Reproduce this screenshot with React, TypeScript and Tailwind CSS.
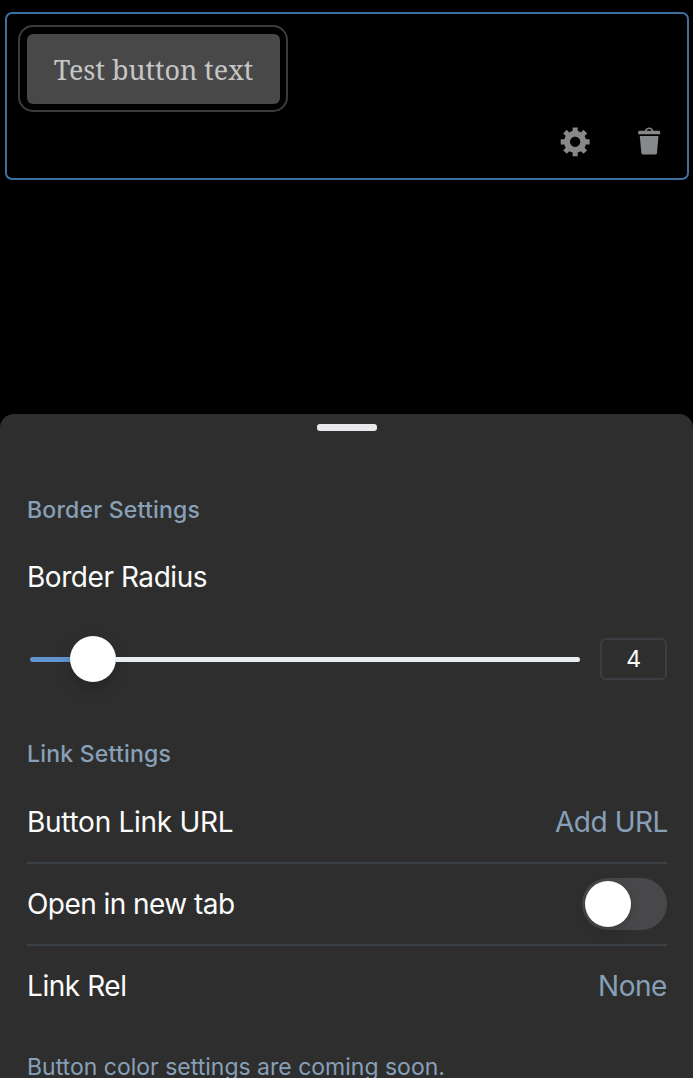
import type { ReactNode } from "react";

function GearIcon() {
  return (
    <svg viewBox="0 0 20 20" className="size-[34px] fill-[#87888a]" aria-hidden="true">
      <path d="M18 12h-2.18c-.17.7-.44 1.35-.81 1.93l1.54 1.54-2.1 2.1-1.54-1.54c-.58.36-1.23.63-1.91.79V19H8v-2.18c-.68-.16-1.33-.43-1.91-.79l-1.54 1.54-2.12-2.12 1.54-1.54c-.36-.58-.63-1.23-.79-1.91H1V9.03h2.17c.16-.7.44-1.35.8-1.94L2.43 5.55l2.1-2.1 1.54 1.54c.58-.37 1.24-.64 1.93-.81V2h3v2.18c.68.16 1.33.43 1.91.79l1.54-1.54 2.12 2.12-1.54 1.54c.36.59.64 1.24.8 1.94H18V12zm-8.5 1.5c1.66 0 3-1.34 3-3s-1.34-3-3-3-3 1.34-3 3 1.34 3 3 3z" />
    </svg>
  );
}

function TrashIcon() {
  return (
    <svg viewBox="0 0 20 20" className="size-[34px] fill-[#87888a]" aria-hidden="true">
      <path d="M12 4h3c.6 0 1 .4 1 1v1H3V5c0-.6.5-1 1-1h3c.2-1.1 1.3-2 2.5-2s2.3.9 2.5 2zM8 4h3c-.2-.6-.9-1-1.5-1S8.2 3.4 8 4zM4 7h11l-.9 10.1c0 .5-.5.9-1 .9H5.9c-.5 0-.9-.4-1-.9L4 7z" />
    </svg>
  );
}

function ButtonBlock() {
  return (
    <section className="mt-3 mr-1 ml-[5px] h-[168px] rounded-[7px] border-2 border-[#3f6f9f] pt-[11px] pl-[11px]">
      <div className="h-[87px] w-[270px] rounded-[15px] border-2 border-[#3c3c3c] p-[7px]">
        <div className="flex h-[70px] w-[253px] items-center justify-center rounded-md bg-[#484848] pt-0.5 font-['Noto_Serif','DejaVu_Serif',serif] text-[26.9px] whitespace-nowrap text-[#c6c6c6]">
          Test button text
        </div>
      </div>
      <div className="mt-3 flex justify-end gap-10 pr-5">
        <GearIcon />
        <TrashIcon />
      </div>
    </section>
  );
}

function Heading({ children }: { children: ReactNode }) {
  return (
    <h2 className="h-8 text-[23px] leading-8 font-medium tracking-[0.22px] text-[#87a0b8]">{children}</h2>
  );
}

function Row({ children }: { children: ReactNode }) {
  return <div className="flex h-20 items-center justify-between">{children}</div>;
}

function SettingsSheet() {
  return (
    <section className="mt-[234px] flex h-[664px] flex-col overflow-hidden rounded-t-[14px] bg-[#2e2e2e] pr-[26px] pl-[27px] text-[28px] leading-9 tracking-[-0.45px] whitespace-nowrap text-[#fcfcfc]">
      <div className="mt-2.5 h-[7px] w-[60px] shrink-0 self-center rounded-[3px] bg-[#e9e9eb]" />
      <div className="mt-[63px]">
        <Heading>Border Settings</Heading>
      </div>
      <div className="mt-[33px] h-9">Border Radius</div>
      <div className="mt-[41px] flex h-[46px] items-center">
        <div className="ml-[3px] flex w-[550px] items-center">
          <div className="mt-px h-[5px] w-10 rounded-l-full bg-[#6096d2]" />
          <div className="size-[46px] rounded-full bg-white shadow-[0_6px_14px_rgba(0,0,0,0.18)]" />
          <div className="mt-px h-[5px] flex-1 rounded-r-full bg-[#e9edf1]" />
        </div>
        <div className="ml-5 flex h-[42px] w-[67px] items-center justify-center rounded-md border-2 border-[#3a3e43] text-[23px]">
          4
        </div>
      </div>
      <div className="mt-14">
        <Heading>Link Settings</Heading>
      </div>
      <div className="mt-3">
        <Row>
          <span className="tracking-[-0.28px]">Button Link URL</span>
          <span className="-mr-px text-[#87a0b8]">Add URL</span>
        </Row>
        <div className="h-0.5 bg-[#3b4046]" />
        <Row>
          <span className="tracking-[-0.55px]">Open in new tab</span>
          <div className="flex h-[52px] w-[85px] items-center rounded-full bg-[#48484a] pl-[3px]">
            <div className="size-[46px] rounded-full bg-white shadow-[0_3px_10px_rgba(0,0,0,0.18)]" />
          </div>
        </Row>
        <div className="h-0.5 bg-[#3b4046]" />
        <Row>
          <span>Link Rel</span>
          <span className="text-[#87a0b8]">None</span>
        </Row>
      </div>
      <p className="mt-[25px] text-[23px] leading-8 tracking-normal text-[#87a0b8]">
        Button color settings are coming soon.
      </p>
    </section>
  );
}

export default function App() {
  return (
    <main className="flex h-[1078px] w-[693px] flex-col overflow-hidden bg-black font-['Inter',sans-serif]">
      <ButtonBlock />
      <SettingsSheet />
    </main>
  );
}
